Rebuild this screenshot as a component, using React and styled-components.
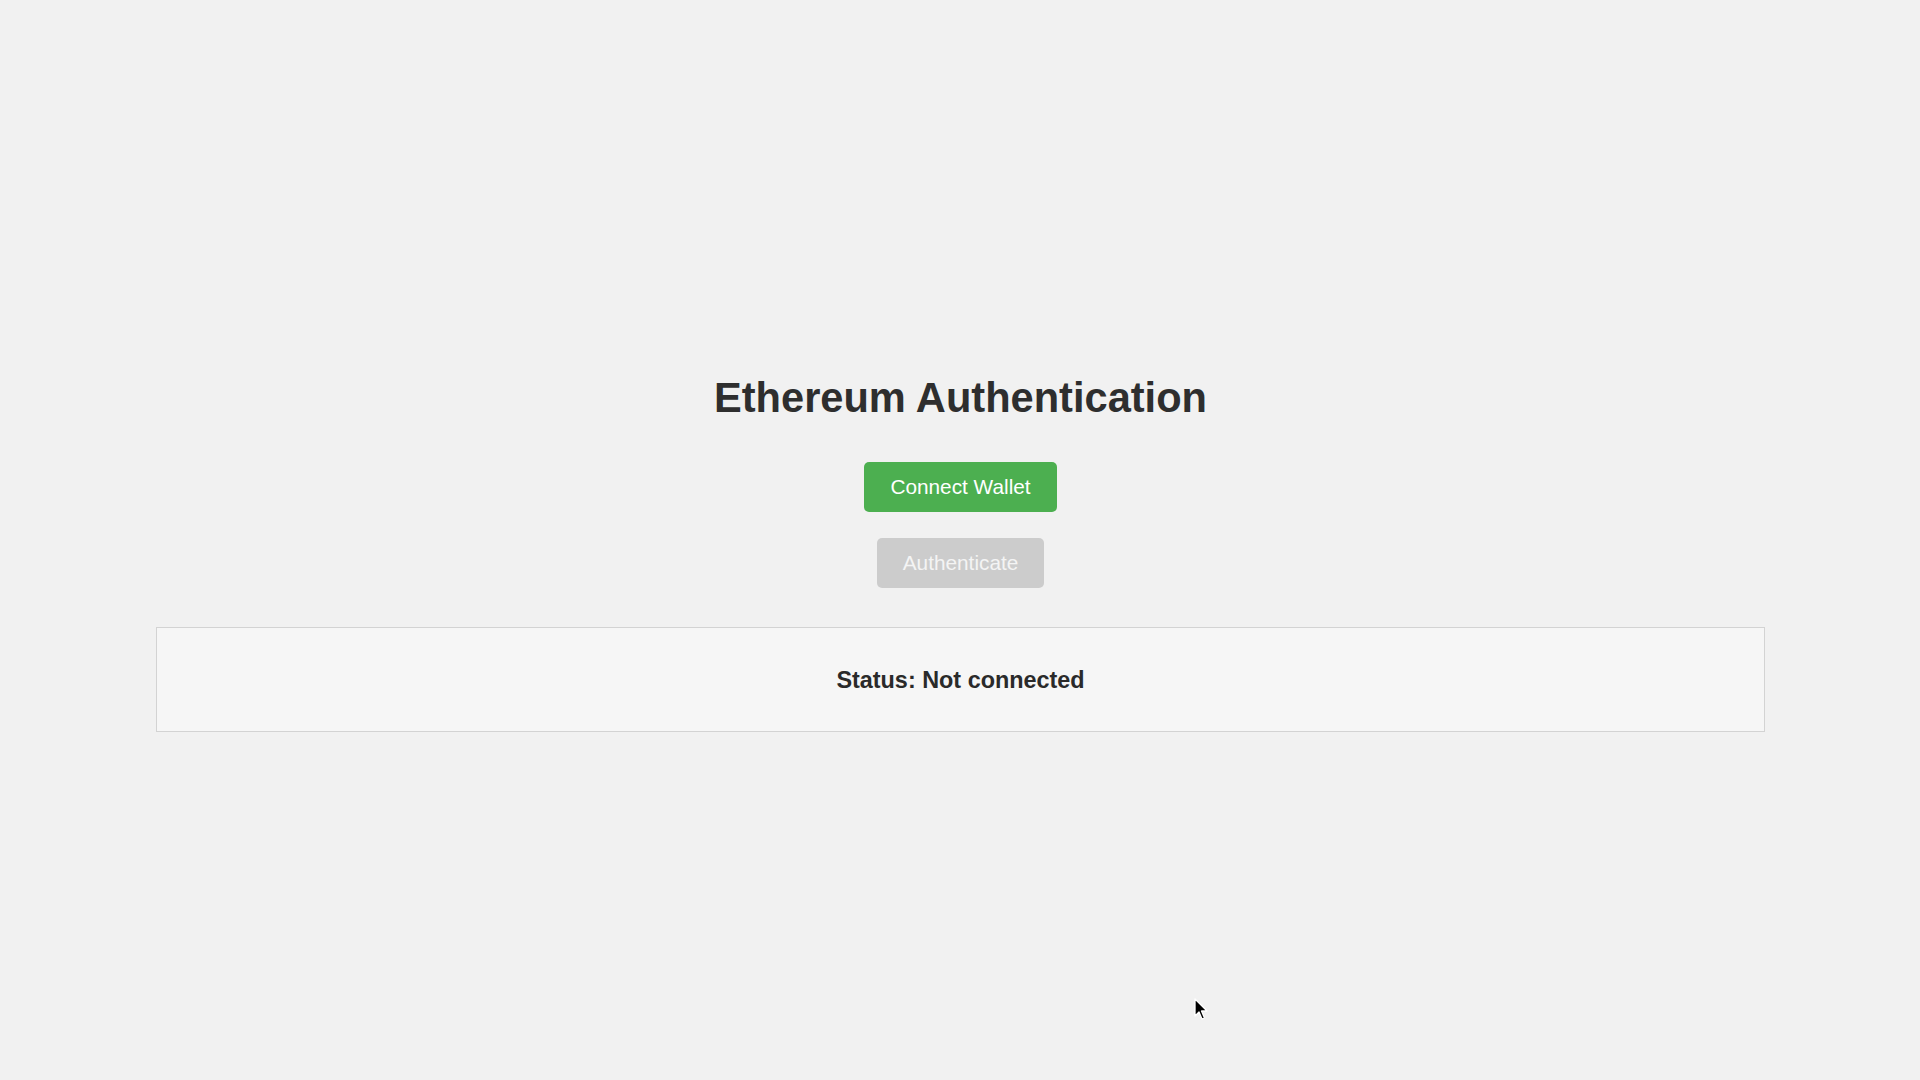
import React from "react";
import styled, { createGlobalStyle } from "styled-components";

const GlobalStyle = createGlobalStyle`
  html, body {
    margin: 0;
    padding: 0;
    background: #f1f1f1;
    font-family: "Liberation Sans", Arial, sans-serif;
  }
`;

const Page = styled.div`
  min-height: 100vh;
  box-sizing: border-box;
  display: flex;
  flex-direction: column;
  justify-content: center;
  align-items: stretch;
  padding: 0 155px 2px 156px;
  position: relative;
`;

const Title = styled.h1`
  margin: 27.9px 0;
  font-size: 41.6px;
  font-weight: bold;
  color: #2e2e2e;
  text-align: center;
`;

const Button = styled.button`
  align-self: center;
  margin: 13px;
  padding: 13px 26px;
  font-family: "Liberation Sans", Arial, sans-serif;
  font-size: 20.8px;
  line-height: 24px;
  border: none;
  border-radius: 5px;
  color: ${(p) => (p.disabled ? "#f4f4f4" : "#ffffff")};
  background: ${(p) => (p.disabled ? "#cccccc" : "#4caf50")};
  cursor: ${(p) => (p.disabled ? "default" : "pointer")};
`;

const StatusBox = styled.div`
  margin-top: 26px;
  height: 105px;
  box-sizing: border-box;
  border: 1.5px solid #d3d3d3;
  background: #f6f6f6;
  display: flex;
  align-items: center;
  justify-content: center;
  padding-top: 2px;
`;

const StatusText = styled.p`
  margin: 0;
  font-size: 23.4px;
  font-weight: bold;
  color: #2a2a2a;
`;

const Pointer = styled.svg`
  position: absolute;
  left: 1193px;
  top: 997px;
  width: 15px;
  height: 24px;
`;

export default function App() {
  return (
    <>
      <GlobalStyle />
      <Page>
        <Title>Ethereum Authentication</Title>
        <Button>Connect Wallet</Button>
        <Button disabled>Authenticate</Button>
        <StatusBox>
          <StatusText>Status: Not connected</StatusText>
        </StatusBox>
        <Pointer viewBox="0 0 15 24">
          <path
            d="M2 2 L2 19 L6 15 L9 22 L11.5 21 L8.5 14 L14 14 Z"
            fill="#000"
            stroke="#fff"
            strokeWidth="1.3"
            strokeLinejoin="round"
          />
        </Pointer>
      </Page>
    </>
  );
}
